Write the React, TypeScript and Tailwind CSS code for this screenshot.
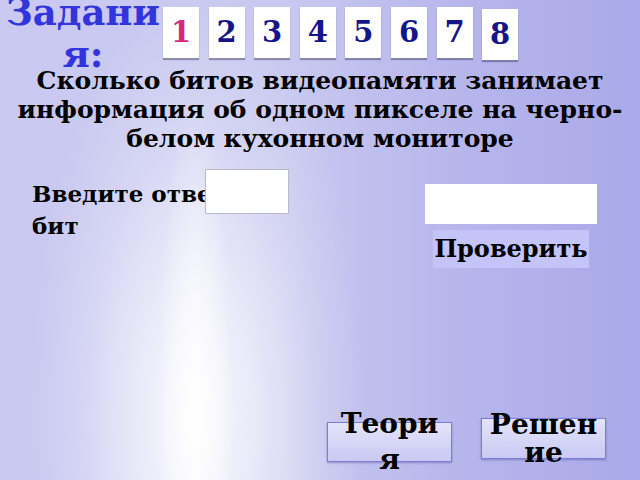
import React from 'react';

const tiles = ['1', '2', '3', '4', '5', '6', '7', '8'];

export default function App() {
  return (
    <div className="w-[640px] h-[480px] overflow-hidden font-[family-name:DejaVu_Serif,serif] font-bold bg-[radial-gradient(ellipse_38px_300px_at_195px_400px,rgba(255,255,255,0.9)_0%,rgba(255,255,255,0)_100%),radial-gradient(ellipse_170px_440px_at_195px_420px,rgba(255,255,255,0.95)_0%,rgba(255,255,255,0.6)_35%,rgba(255,255,255,0.2)_70%,rgba(255,255,255,0)_100%),linear-gradient(90deg,#c9c9f1_0%,#c8c8f0_45%,#b6b6ec_72%,#aaa9e9_100%)]">
      <div className="w-full h-full flex flex-col">
        {/* Header */}
        <div className="flex items-start h-[62px]">
          <div className="w-[160px] ml-[3px] mt-[-9px] text-[37px] leading-[42px] text-[#3434dc] text-center break-all">
            Задания:
          </div>
          <div className="flex gap-[9.6px] mt-[7px]">
            {tiles.map((t, i) => (
              <div
                key={t}
                className={`w-[36px] h-[51px] bg-white flex items-center justify-center text-[29px] shadow-[0_2px_1px_rgba(60,60,90,0.45)] ${i === 0 ? 'text-[#d3287c]' : 'text-[#15158a]'} ${i === 7 ? 'mt-[2px]' : ''}`}
              >
                {t}
              </div>
            ))}
          </div>
        </div>

        {/* Question */}
        <div className="mt-[4px] px-[10px] text-center text-[25px] leading-[29px] text-black">
          Сколько битов видеопамяти занимает информация об одном пикселе на черно-белом кухонном мониторе
        </div>

        {/* Answer */}
        <div className="flex justify-between mt-[16px]">
          <div className="relative ml-[32px] w-[260px]">
            <div className="mt-[9px] text-[23px] leading-[32px] text-black w-[230px]">
              Введите ответ в бит
            </div>
            <div className="absolute left-[173px] top-0 w-[84px] h-[45px] bg-white border border-[#b8b8c8]" />
          </div>
          <div className="flex flex-col items-center mr-[43px] mt-[15px]">
            <div className="w-[172px] h-[40px] bg-white" />
            <div className="mt-[6px] w-[156px] h-[38px] bg-[#c4c4f8] text-[24px] leading-[38px] text-black text-center whitespace-nowrap">
              Проверить
            </div>
          </div>
        </div>

        {/* Bottom buttons */}
        <div className="mt-auto mb-[18px] flex items-start justify-end gap-[29px] mr-[34px]">
          <div className="mt-[4px] w-[125px] h-[40px] border border-[#7c7cdc] bg-[linear-gradient(180deg,#e4e4fb,#c9c9f3)] flex items-center justify-center shadow-[0_1px_2px_rgba(60,60,120,0.4)]">
            <span className="text-[28px] leading-[36px] text-black text-center break-all w-[110px]">Теория</span>
          </div>
          <div className="w-[125px] h-[41px] border border-[#7c7cdc] bg-[linear-gradient(180deg,#e4e4fb,#c9c9f3)] flex items-center justify-center shadow-[0_1px_2px_rgba(60,60,120,0.4)]">
            <span className="text-[28px] leading-[28px] text-black text-center break-all w-[112px]">Решение</span>
          </div>
        </div>
      </div>
    </div>
  );
}
